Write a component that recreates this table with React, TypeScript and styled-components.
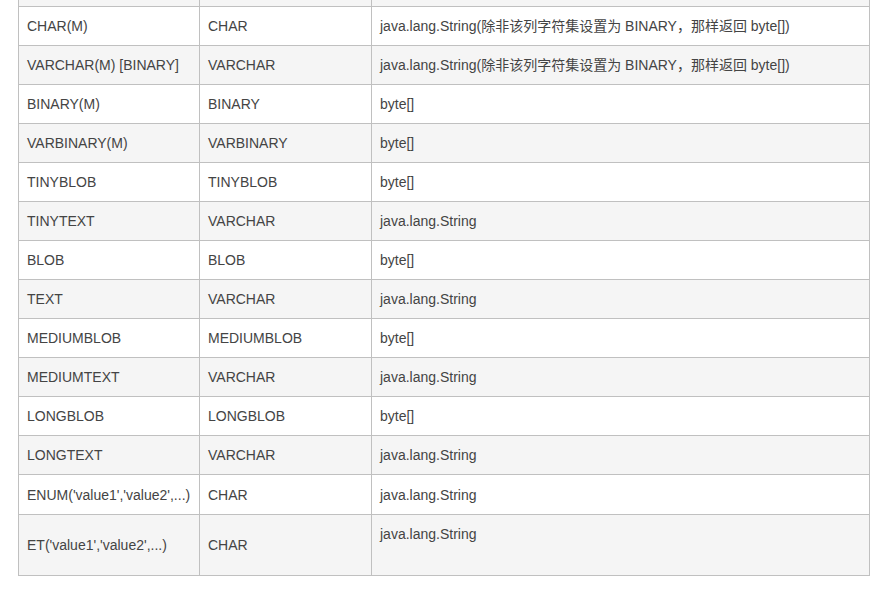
import React from "react";
import styled, { createGlobalStyle } from "styled-components";

const GlobalStyle = createGlobalStyle`
  html, body {
    margin: 0;
    padding: 0;
    background: #ffffff;
    overflow: hidden;
  }
`;

const Page = styled.div`
  width: 889px;
  height: 594px;
  overflow: hidden;
  padding-left: 18px;
  box-sizing: border-box;
`;

const TypeTable = styled.table`
  margin-top: -33px;
  width: 852px;
  table-layout: fixed;
  border-collapse: collapse;
  border: 1px solid #c0c0c0;
  font-family: "Liberation Sans", Arial, "Noto Sans CJK SC", sans-serif;
  font-size: 14px;
  line-height: 22px;
  color: #444444;
`;

const Row = styled.tr<{ $striped: boolean; $tall?: boolean }>`
  background: ${(p) => (p.$striped ? "#f5f5f5" : "#ffffff")};
  height: ${(p) => (p.$tall ? "40px" : "auto")};
`;

const Cell = styled.td`
  border: 1px solid #c0c0c0;
  padding: 8px;
  vertical-align: middle;
  white-space: nowrap;
  overflow: hidden;
`;

// empty paragraph under the text in the last row
const BlankLine = styled.span`
  display: block;
  height: 22px;
`;

type TypeRow = {
  mysql: string;
  sql: string;
  java: string;
  blank?: boolean;
  tall?: boolean;
};

const rows: TypeRow[] = [
  { mysql: "\u00a0", sql: "\u00a0", java: "\u00a0" },
  { mysql: "CHAR(M)", sql: "CHAR", java: "java.lang.String(除非该列字符集设置为 BINARY，那样返回 byte[])" },
  { mysql: "VARCHAR(M) [BINARY]", sql: "VARCHAR", java: "java.lang.String(除非该列字符集设置为 BINARY，那样返回 byte[])" },
  { mysql: "BINARY(M)", sql: "BINARY", java: "byte[]" },
  { mysql: "VARBINARY(M)", sql: "VARBINARY", java: "byte[]" },
  { mysql: "TINYBLOB", sql: "TINYBLOB", java: "byte[]" },
  { mysql: "TINYTEXT", sql: "VARCHAR", java: "java.lang.String" },
  { mysql: "BLOB", sql: "BLOB", java: "byte[]" },
  { mysql: "TEXT", sql: "VARCHAR", java: "java.lang.String" },
  { mysql: "MEDIUMBLOB", sql: "MEDIUMBLOB", java: "byte[]" },
  { mysql: "MEDIUMTEXT", sql: "VARCHAR", java: "java.lang.String" },
  { mysql: "LONGBLOB", sql: "LONGBLOB", java: "byte[]" },
  { mysql: "LONGTEXT", sql: "VARCHAR", java: "java.lang.String" },
  { mysql: "ENUM('value1','value2',...)", sql: "CHAR", java: "java.lang.String", tall: true },
  { mysql: "ET('value1','value2',...)", sql: "CHAR", java: "java.lang.String", blank: true },
];

export default function App() {
  return (
    <>
      <GlobalStyle />
      <Page>
        <TypeTable>
          <colgroup>
            <col style={{ width: 181 }} />
            <col style={{ width: 172 }} />
            <col />
          </colgroup>
          <tbody>
            {rows.map((r, i) => (
              <Row key={i} $striped={i % 2 === 0} $tall={r.tall}>
                <Cell>{r.mysql}</Cell>
                <Cell>{r.sql}</Cell>
                <Cell>
                  {r.java}
                  {r.blank && <BlankLine />}
                </Cell>
              </Row>
            ))}
          </tbody>
        </TypeTable>
      </Page>
    </>
  );
}
